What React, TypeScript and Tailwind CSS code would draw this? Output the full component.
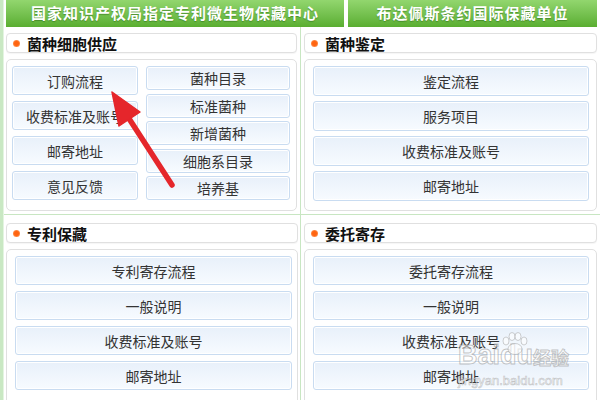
import React from "react";

const FONT = { fontFamily: '"Noto Sans CJK SC", "Noto Sans", sans-serif' };

function Btn({ label, h }: { label: string; h: string }) {
  return (
    <div
      className={`${h} shrink-0 flex items-center justify-center rounded-[3px] border border-[#c9dcf1] bg-linear-to-b from-[#e8f0fa] to-[#f7fbff] shadow-[inset_0_0_0_1px_#ffffff] text-[14px] leading-none text-[#333333]`}
    >
      {label}
    </div>
  );
}

function Title({ text }: { text: string }) {
  return (
    <div className="h-[20px] shrink-0 flex items-center rounded-[4px] border border-[#e0e0e0] bg-white shadow-[0_1px_1px_rgba(0,0,0,0.04)]">
      <span className="ml-[6px] w-[7px] h-[7px] rounded-full bg-[radial-gradient(circle,#ff6410_40%,#ffb784_100%)]" />
      <span className="ml-[7px] text-[15px] font-bold leading-none text-[#111111]">{text}</span>
    </div>
  );
}

function Paw() {
  return (
    <svg width="30" height="24" viewBox="0 0 30 24" className="absolute left-[499px] top-[332px]">
      <g fill="rgba(255,255,255,0.55)" stroke="rgba(150,150,150,0.45)" strokeWidth="1">
        <ellipse cx="7" cy="9" rx="3" ry="4" />
        <ellipse cx="13" cy="4.5" rx="3" ry="4" />
        <ellipse cx="19" cy="4.5" rx="3" ry="4" />
        <ellipse cx="25" cy="9" rx="3" ry="4" />
        <ellipse cx="16" cy="17" rx="7" ry="5.5" />
      </g>
    </svg>
  );
}

export default function App() {
  return (
    <div className="relative w-[600px] h-[400px] overflow-hidden bg-white flex" style={FONT}>
      {/* left strip */}
      <div className="w-[4px] shrink-0 h-full bg-[#c9e8c3] border-r border-[#e4f4e1]" />
      <div className="flex-1 flex flex-col">
        {/* header */}
        <div className="h-[27px] shrink-0 flex gap-[4px] pl-[2px]">
          <div className="w-[338px] flex items-center justify-center bg-linear-to-b from-[#92d66e] to-[#5aae30] text-white text-[15px] font-bold tracking-[1px] [text-shadow:0_1px_1px_rgba(40,100,20,0.5)]">
            国家知识产权局指定专利微生物保藏中心
          </div>
          <div className="w-[249px] flex items-center justify-center bg-linear-to-b from-[#92d66e] to-[#5aae30] text-white text-[15px] font-bold tracking-[1px] [text-shadow:0_1px_1px_rgba(40,100,20,0.5)]">
            布达佩斯条约国际保藏单位
          </div>
        </div>

        {/* top row */}
        <div className="h-[187px] shrink-0 flex">
          <div className="w-[296px] pl-[2px] pr-[3px] pt-[6px] flex flex-col gap-[6px]">
            <Title text="菌种细胞供应" />
            <div className="h-[152px] shrink-0 rounded-[5px] border border-[#e0e0e0] bg-white pl-[5px] pr-[6px] pt-[6px]">
              <div className="h-[134px] flex gap-[8px]">
                <div className="w-[126px] flex flex-col justify-between">
                  <Btn label="订购流程" h="h-[29px]" />
                  <Btn label="收费标准及账号" h="h-[29px]" />
                  <Btn label="邮寄地址" h="h-[29px]" />
                  <Btn label="意见反馈" h="h-[29px]" />
                </div>
                <div className="flex-1 flex flex-col justify-between">
                  <Btn label="菌种目录" h="h-[24px]" />
                  <Btn label="标准菌种" h="h-[24px]" />
                  <Btn label="新增菌种" h="h-[24px]" />
                  <Btn label="细胞系目录" h="h-[24px]" />
                  <Btn label="培养基" h="h-[24px]" />
                </div>
              </div>
            </div>
          </div>
          <div className="w-[1px] bg-[#c8e6c2]" />
          <div className="flex-1 pl-[3px] pr-[3px] pt-[6px] flex flex-col gap-[6px]">
            <Title text="菌种鉴定" />
            <div className="h-[152px] shrink-0 rounded-[5px] border border-[#e0e0e0] bg-white pl-[8px] pr-[7px] pt-[6px] flex flex-col gap-[5px]">
              <Btn label="鉴定流程" h="h-[30px]" />
              <Btn label="服务项目" h="h-[30px]" />
              <Btn label="收费标准及账号" h="h-[30px]" />
              <Btn label="邮寄地址" h="h-[30px]" />
            </div>
          </div>
        </div>

        <div className="h-[1px] shrink-0 bg-[#c8e6c2]" />

        {/* bottom row */}
        <div className="flex-1 min-h-0 flex">
          <div className="w-[296px] pl-[2px] pr-[2px] pt-[8px] flex flex-col gap-[6px]">
            <Title text="专利保藏" />
            <div className="h-[170px] shrink-0 rounded-[5px] border border-[#e0e0e0] bg-white pl-[8px] pr-[5px] pt-[6px] flex flex-col gap-[6px]">
              <Btn label="专利寄存流程" h="h-[29px]" />
              <Btn label="一般说明" h="h-[29px]" />
              <Btn label="收费标准及账号" h="h-[29px]" />
              <Btn label="邮寄地址" h="h-[29px]" />
            </div>
          </div>
          <div className="w-[1px] bg-[#c8e6c2]" />
          <div className="flex-1 pl-[3px] pr-[3px] pt-[8px] flex flex-col gap-[6px]">
            <Title text="委托寄存" />
            <div className="h-[170px] shrink-0 rounded-[5px] border border-[#e0e0e0] bg-white pl-[8px] pr-[7px] pt-[6px] flex flex-col gap-[6px]">
              <Btn label="委托寄存流程" h="h-[29px]" />
              <Btn label="一般说明" h="h-[29px]" />
              <Btn label="收费标准及账号" h="h-[29px]" />
              <Btn label="邮寄地址" h="h-[29px]" />
            </div>
          </div>
        </div>
      </div>

      {/* red arrow annotation */}
      <svg width="600" height="400" className="absolute left-0 top-0 pointer-events-none">
        <line x1="172" y1="185" x2="128" y2="117" stroke="#e5262b" strokeWidth="5.5" strokeLinecap="round" />
        <polygon points="112,92 140,112 119,126" fill="#e5262b" stroke="#e5262b" strokeWidth="1.5" strokeLinejoin="round" />
      </svg>

      {/* watermark */}
      <div className="absolute left-[458px] top-[342px] text-[27px] font-bold leading-none text-[rgba(255,255,255,0.55)] [-webkit-text-stroke:1px_rgba(140,140,140,0.5)]" style={{ fontFamily: '"Liberation Sans", sans-serif' }}>
        Baidu
      </div>
      <Paw />
      <div className="absolute left-[533px] top-[348px] text-[18px] font-bold leading-none text-[rgba(255,255,255,0.55)] [-webkit-text-stroke:1px_rgba(140,140,140,0.5)]">
        经验
      </div>
      <div className="absolute left-[458px] top-[374px] text-[13px] leading-none text-[rgba(255,255,255,0.55)] [-webkit-text-stroke:0.6px_rgba(140,140,140,0.5)]" style={{ fontFamily: '"Liberation Sans", sans-serif' }}>
        jingyan.baidu.com
      </div>
    </div>
  );
}
